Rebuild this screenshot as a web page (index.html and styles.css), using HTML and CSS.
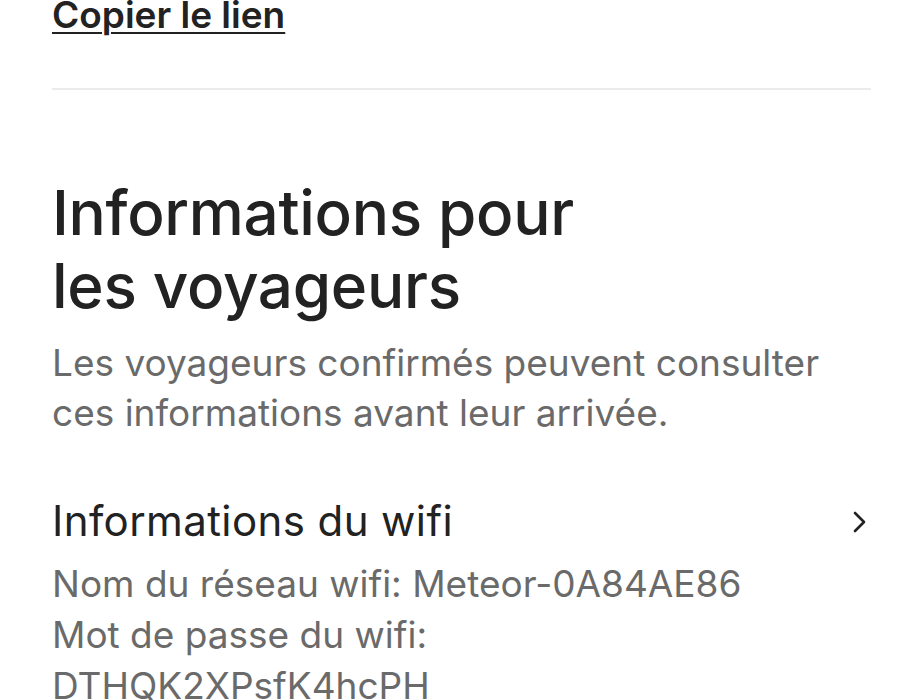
FILE: index.html
```html
<!DOCTYPE html>
<html lang="fr">
<head>
  <meta charset="UTF-8" />
  <meta name="viewport" content="width=device-width, initial-scale=1.0"/>
  <title>Informations pour les voyageurs</title>
  <link rel="stylesheet" href="styles.css">
</head>
<body>

  <!-- Share -->
  <div class="share">
    <a href="#" class="copy-link">Copier le lien</a>
  </div>

  <hr class="divider">

  <!-- Guest info -->
  <section class="guest-info">
    <h1>Informations pour<br>les voyageurs</h1>
    <p class="subtitle">Les voyageurs confirmés peuvent consulter ces informations avant leur arrivée.</p>

    <div class="info-row">
      <div class="info-text">
        <div class="info-title">Informations du wifi</div>
        <div class="info-detail">Nom du réseau wifi: Meteor-0A84AE86</div>
        <div class="info-detail">Mot de passe du wifi:<br>DTHQK2XPsfK4hcPH</div>
      </div>
      <svg class="chevron" width="24" height="24" viewBox="0 0 24 24" fill="none">
        <path d="M8 3 L17 12 L8 21" stroke="#222" stroke-width="2.6" stroke-linecap="round" stroke-linejoin="round"/>
      </svg>
    </div>
  </section>

</body>
</html>
```

FILE: styles.css
```css
body {
  font-family: 'Inter', 'Noto Sans', sans-serif;
  margin: 0;
  padding: 0 52px;
  background: #fff;
  color: #222;
  overflow: hidden;
}

.share {
  font-size: 37px;
  line-height: 30px;
}

.copy-link {
  font-weight: 600;
  color: #222;
  text-decoration: underline;
  text-decoration-thickness: 2px;
  text-underline-offset: 4px;
}

.divider {
  border: none;
  border-top: 2px solid #ebebeb;
  margin: 58px 0 0;
}

.guest-info h1 {
  font-size: 62px;
  line-height: 73px;
  font-weight: 500;
  margin: 86px 0 0;
  letter-spacing: -0.3px;
}

.subtitle {
  font-size: 37px;
  line-height: 50px;
  color: #6a6a6a;
  margin: 16px 0 0;
  max-width: 790px;
}

.info-row {
  display: flex;
  justify-content: space-between;
  align-items: flex-start;
  margin-top: 58px;
}

.info-title {
  font-size: 42px;
  line-height: 50px;
  letter-spacing: 0.4px;
  color: #222;
}

.info-detail {
  font-size: 37px;
  line-height: 51px;
  color: #6a6a6a;
}

.info-title + .info-detail {
  margin-top: 12px;
}

.chevron {
  margin-top: 14px;
  flex-shrink: 0;
}
```
